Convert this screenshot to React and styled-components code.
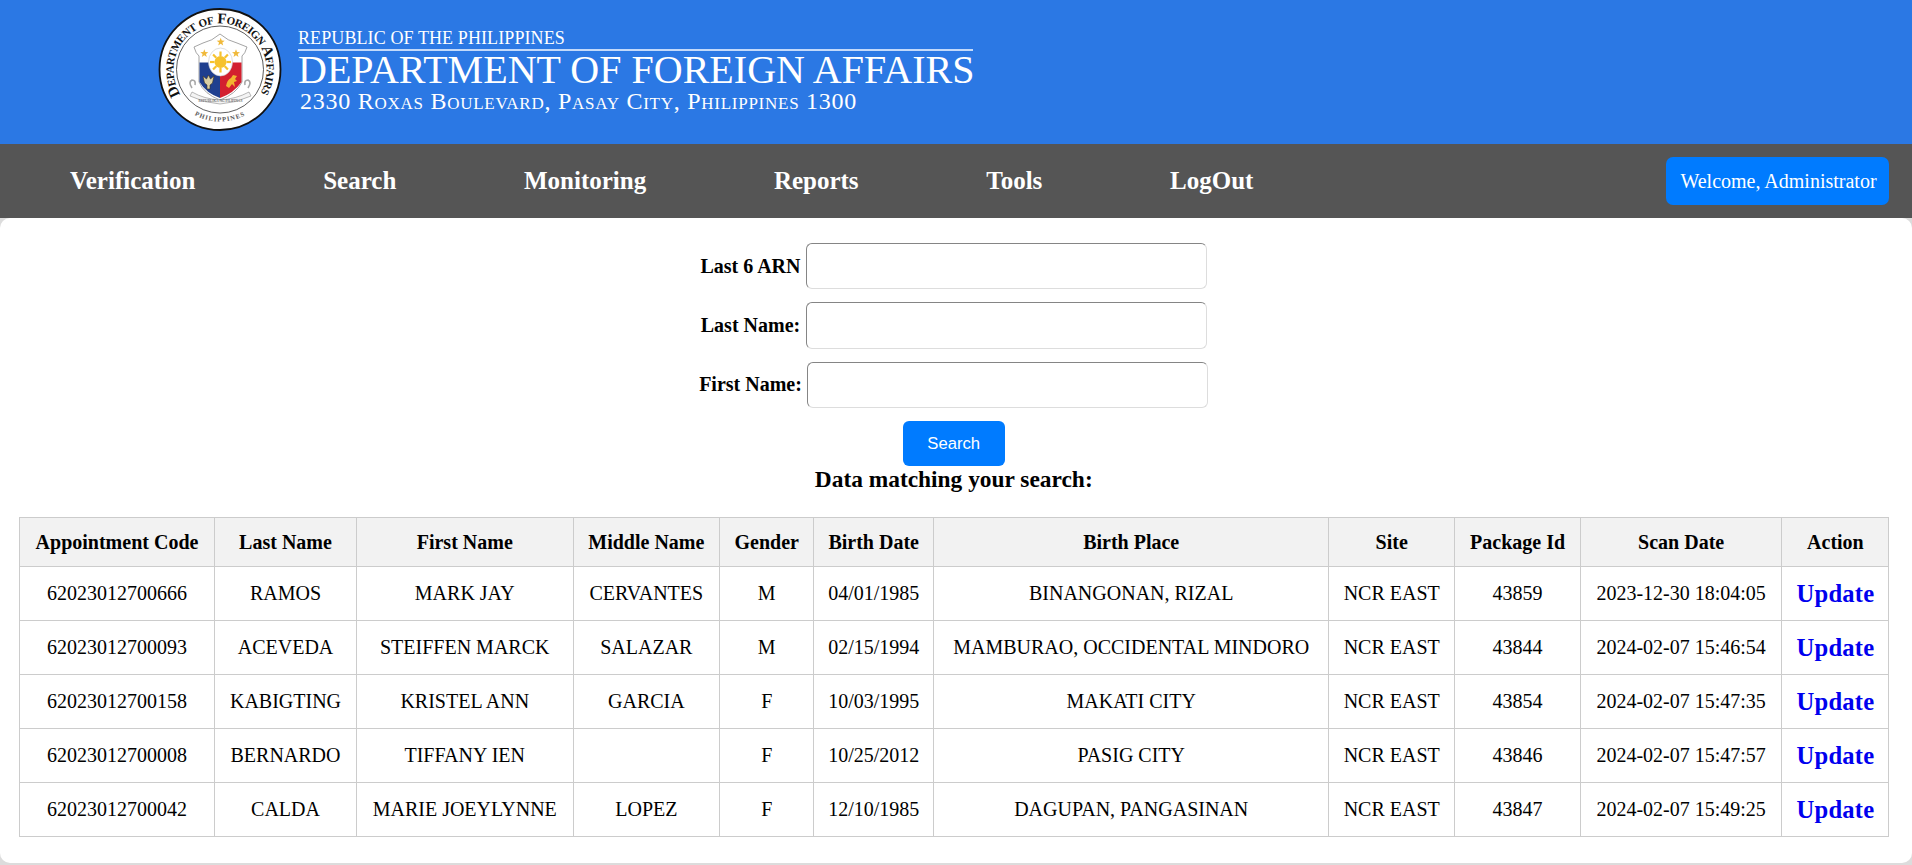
import React from 'react'
import styled, { createGlobalStyle } from 'styled-components'

const GlobalStyle = createGlobalStyle`
  html, body {
    margin: 0;
    padding: 0;
    background: #dcdcdc;
    font-family: "Liberation Serif", "Times New Roman", serif;
  }
`

const Banner = styled.header`
  display: flex;
  align-items: flex-start;
  height: 144px;
  padding-left: 154px;
  background: #2b78e4;
  color: #ffffff;
`

const Seal = styled.svg`
  width: 132px;
  height: 132px;
  margin-top: 4px;
  flex: none;
`

const BannerText = styled.div`
  display: flex;
  flex-direction: column;
  margin-left: 12px;
  padding-top: 27px;
  width: 675px;
`

const Republic = styled.div`
  font-size: 18px;
  line-height: 22px;
  letter-spacing: 0.1px;
  white-space: nowrap;
  border-bottom: 2px solid #c4dafa;
`

const Department = styled.div`
  margin-top: 1px;
  font-size: 40px;
  line-height: 36px;
  letter-spacing: 0.02px;
  white-space: nowrap;
`

const Address = styled.div`
  font-size: 24px;
  line-height: 24px;
  font-variant: small-caps;
  letter-spacing: 0.74px;
  margin: 1px 0 0 2px;
  white-space: nowrap;
`

const NavBar = styled.nav`
  display: flex;
  align-items: center;
  gap: 127.7px;
  height: 74px;
  padding: 0 23px 0 70px;
  background: #555555;
`

const NavLink = styled.a`
  color: #ffffff;
  font-size: 25px;
  font-weight: bold;
  text-decoration: none;
`

const Welcome = styled.button`
  margin-left: auto;
  width: 223px;
  height: 48px;
  padding: 0 0 0 2px;
  border: none;
  border-radius: 7px;
  background: #007bff;
  color: #ffffff;
  font-family: inherit;
  font-size: 20px;
`

const Card = styled.main`
  height: 645px;
  box-sizing: border-box;
  padding: 25px 23.5px 0 19px;
  background: #ffffff;
  border-radius: 10px;
`

const SearchForm = styled.form`
  display: flex;
  flex-direction: column;
  align-items: center;
  gap: 13px;
`

const Field = styled.div`
  display: flex;
  align-items: center;
  gap: 5.5px;
`

const Label = styled.label`
  font-size: 20px;
  font-weight: bold;
  color: #000000;
`

const Input = styled.input`
  box-sizing: border-box;
  width: 401px;
  height: 46.4px;
  padding: 0 10px;
  border: 1px solid #dddddd;
  border-top-color: #858585;
  border-left-color: #858585;
  border-radius: 6px;
  background: #ffffff;
  font-size: 20px;
`

const SearchButton = styled.button`
  width: 102px;
  height: 45px;
  padding: 0;
  border: none;
  border-radius: 6px;
  background: #007bff;
  color: #ffffff;
  font-family: "Liberation Sans", Arial, sans-serif;
  font-size: 16.67px;
`

const ResultTitle = styled.h3`
  margin: 0 0 24px;
  height: 27px;
  font-size: 23.4px;
  line-height: 27px;
  font-weight: bold;
  text-align: center;
  color: #000000;
`

const Table = styled.table`
  width: 1869.5px;
  table-layout: fixed;
  border-collapse: collapse;
  color: #000000;
`

const HeadCell = styled.th`
  height: 48px;
  padding: 0;
  border: 1px solid #cccccc;
  background: #f2f2f2;
  font-size: 20px;
  font-weight: bold;
  text-align: center;
`

const Cell = styled.td`
  height: 53px;
  padding: 0;
  border: 1px solid #cccccc;
  font-size: 20px;
  text-align: center;
  white-space: nowrap;
`

const UpdateLink = styled.a`
  color: #0000ee;
  font-size: 24.6px;
  font-weight: bold;
  letter-spacing: 0.2px;
  text-decoration: none;
`

const navItems = ['Verification', 'Search', 'Monitoring', 'Reports', 'Tools', 'LogOut']

const columns = [
  ['Appointment Code', 195],
  ['Last Name', 142],
  ['First Name', 216.5],
  ['Middle Name', 146.7],
  ['Gender', 94],
  ['Birth Date', 120],
  ['Birth Place', 395],
  ['Site', 126],
  ['Package Id', 125.7],
  ['Scan Date', 201.5],
  ['Action', 107.1],
]

const rows = [
  ['62023012700666', 'RAMOS', 'MARK JAY', 'CERVANTES', 'M', '04/01/1985', 'BINANGONAN, RIZAL', 'NCR EAST', '43859', '2023-12-30 18:04:05'],
  ['62023012700093', 'ACEVEDA', 'STEIFFEN MARCK', 'SALAZAR', 'M', '02/15/1994', 'MAMBURAO, OCCIDENTAL MINDORO', 'NCR EAST', '43844', '2024-02-07 15:46:54'],
  ['62023012700158', 'KABIGTING', 'KRISTEL ANN', 'GARCIA', 'F', '10/03/1995', 'MAKATI CITY', 'NCR EAST', '43854', '2024-02-07 15:47:35'],
  ['62023012700008', 'BERNARDO', 'TIFFANY IEN', '', 'F', '10/25/2012', 'PASIG CITY', 'NCR EAST', '43846', '2024-02-07 15:47:57'],
  ['62023012700042', 'CALDA', 'MARIE JOEYLYNNE', 'LOPEZ', 'F', '12/10/1985', 'DAGUPAN, PANGASINAN', 'NCR EAST', '43847', '2024-02-07 15:49:25'],
]

const starPoints = (cx, cy, r) => {
  const points = []
  for (let i = 0; i < 10; i++) {
    const radius = i % 2 === 0 ? r : r * 0.42
    const angle = (Math.PI / 5) * i - Math.PI / 2
    points.push(`${(cx + radius * Math.cos(angle)).toFixed(2)},${(cy + radius * Math.sin(angle)).toFixed(2)}`)
  }
  return points.join(' ')
}

const sunRays = Array.from({ length: 8 }, (_, i) => i * 45)

const SealLogo = () => (
  <Seal viewBox="0 0 132 132">
    <defs>
      <path id="sealTop" d="M26.6 90.6 A46.5 46.5 0 1 1 105.4 90.6" />
      <path id="sealBottom" d="M38 109.5 A53 53 0 0 0 94 109.5" />
    </defs>
    <circle cx="66" cy="65.5" r="60.5" fill="#ffffff" stroke="#111111" strokeWidth="1.8" />
    <circle cx="66" cy="65.5" r="43.5" fill="#ffffff" stroke="#333333" strokeWidth="0.8" />
    <text fontFamily="Liberation Serif, serif" fontSize="15" fontVariant="small-caps" fontWeight="bold" fill="#111111">
      <textPath href="#sealTop" textLength="196" lengthAdjust="spacing">Department of Foreign Affairs</textPath>
    </text>
    <text fontFamily="Liberation Serif, serif" fontSize="6.5" fontWeight="bold" fill="#555555">
      <textPath href="#sealBottom" startOffset="3" textLength="52" lengthAdjust="spacing">PHILIPPINES</textPath>
    </text>
    <path d="M40 43 L49 39 Q58 37 66 30 Q74 37 83 39 L93 43 Q91 50 88 52 L88 78 Q82 90 66 96 Q50 90 45 78 L45 52 Q42 50 40 43 Z" fill="#ffffff" stroke="#9a9a9a" strokeWidth="0.9" />
    <path d="M45.5 58.5 L66 58.5 L66 94 Q52 89 45.5 78 Z" fill="#1f3f8f" />
    <path d="M66 58.5 L87.5 58.5 L87.5 78 Q80 89 66 94 Z" fill="#d3202f" />
    <ellipse cx="66.5" cy="58" rx="12" ry="14" fill="#ffffff" stroke="#c8c8c8" strokeWidth="0.6" />
    <circle cx="66.5" cy="58" r="6" fill="#f6c22d" />
    {sunRays.map((deg) => (
      <rect key={deg} x="65.4" y="47.5" width="2.2" height="4.5" fill="#f6c22d" transform={`rotate(${deg} 66.5 58)`} />
    ))}
    <polygon points={starPoints(66.7, 38, 4.2)} fill="#f0b93a" />
    <polygon points={starPoints(50.3, 49.5, 4.2)} fill="#f0b93a" />
    <polygon points={starPoints(82, 49.5, 4.2)} fill="#f0b93a" />
    <path d="M49 72 L52.5 75 L54.5 71 L56.5 75 L60 72 L58.5 79 L56 81 L56 85 L53 85 L53 81 L50.5 79 Z" fill="#d9cfa4" stroke="#3a3320" strokeWidth="0.6" />
    <path d="M72 82 Q73 76 77 74 L79 71 L83 72 L81 75 L83 77 L80 78 L81 83 L78 80 L75 84 Z" fill="#f2b531" />
    <path d="M38 84 Q34 78 38 76 Q42 76 41 81 M94 84 Q98 78 94 76 Q90 76 91 81" fill="none" stroke="#a8a8a8" strokeWidth="1.6" />
    <path d="M38 88 Q50 95 66 96 Q82 95 95 88 L97 92 Q82 99 66 100 Q50 99 36 92 Z" fill="#f4f4f4" stroke="#8b8b8b" strokeWidth="0.6" />
    <text x="66.5" y="97.5" textAnchor="middle" fontFamily="Liberation Serif, serif" fontSize="3.6" fill="#444444">REPUBLIKA NG PILIPINAS</text>
  </Seal>
)

const App = () => {
  return (
    <>
      <GlobalStyle />
      <Banner>
        <SealLogo />
        <BannerText>
          <Republic>REPUBLIC OF THE PHILIPPINES</Republic>
          <Department>DEPARTMENT OF FOREIGN AFFAIRS</Department>
          <Address>2330 Roxas Boulevard, Pasay City, Philippines 1300</Address>
        </BannerText>
      </Banner>
      <NavBar>
        {navItems.map((item) => (
          <NavLink key={item} href="#">{item}</NavLink>
        ))}
        <Welcome>Welcome, Administrator</Welcome>
      </NavBar>
      <Card>
        <SearchForm>
          <Field>
            <Label htmlFor="arn">Last 6 ARN</Label>
            <Input id="arn" />
          </Field>
          <Field>
            <Label htmlFor="lastName">Last Name:</Label>
            <Input id="lastName" />
          </Field>
          <Field>
            <Label htmlFor="firstName">First Name:</Label>
            <Input id="firstName" />
          </Field>
          <SearchButton type="button">Search</SearchButton>
        </SearchForm>
        <ResultTitle>Data matching your search:</ResultTitle>
        <Table>
          <colgroup>
            {columns.map(([name, width]) => (
              <col key={name} width={width} />
            ))}
          </colgroup>
          <thead>
            <tr>
              {columns.map(([name]) => (
                <HeadCell key={name}>{name}</HeadCell>
              ))}
            </tr>
          </thead>
          <tbody>
            {rows.map((row) => (
              <tr key={row[0]}>
                {row.map((value, i) => (
                  <Cell key={i}>{value}</Cell>
                ))}
                <Cell><UpdateLink href="#">Update</UpdateLink></Cell>
              </tr>
            ))}
          </tbody>
        </Table>
      </Card>
    </>
  )
}

export default App
